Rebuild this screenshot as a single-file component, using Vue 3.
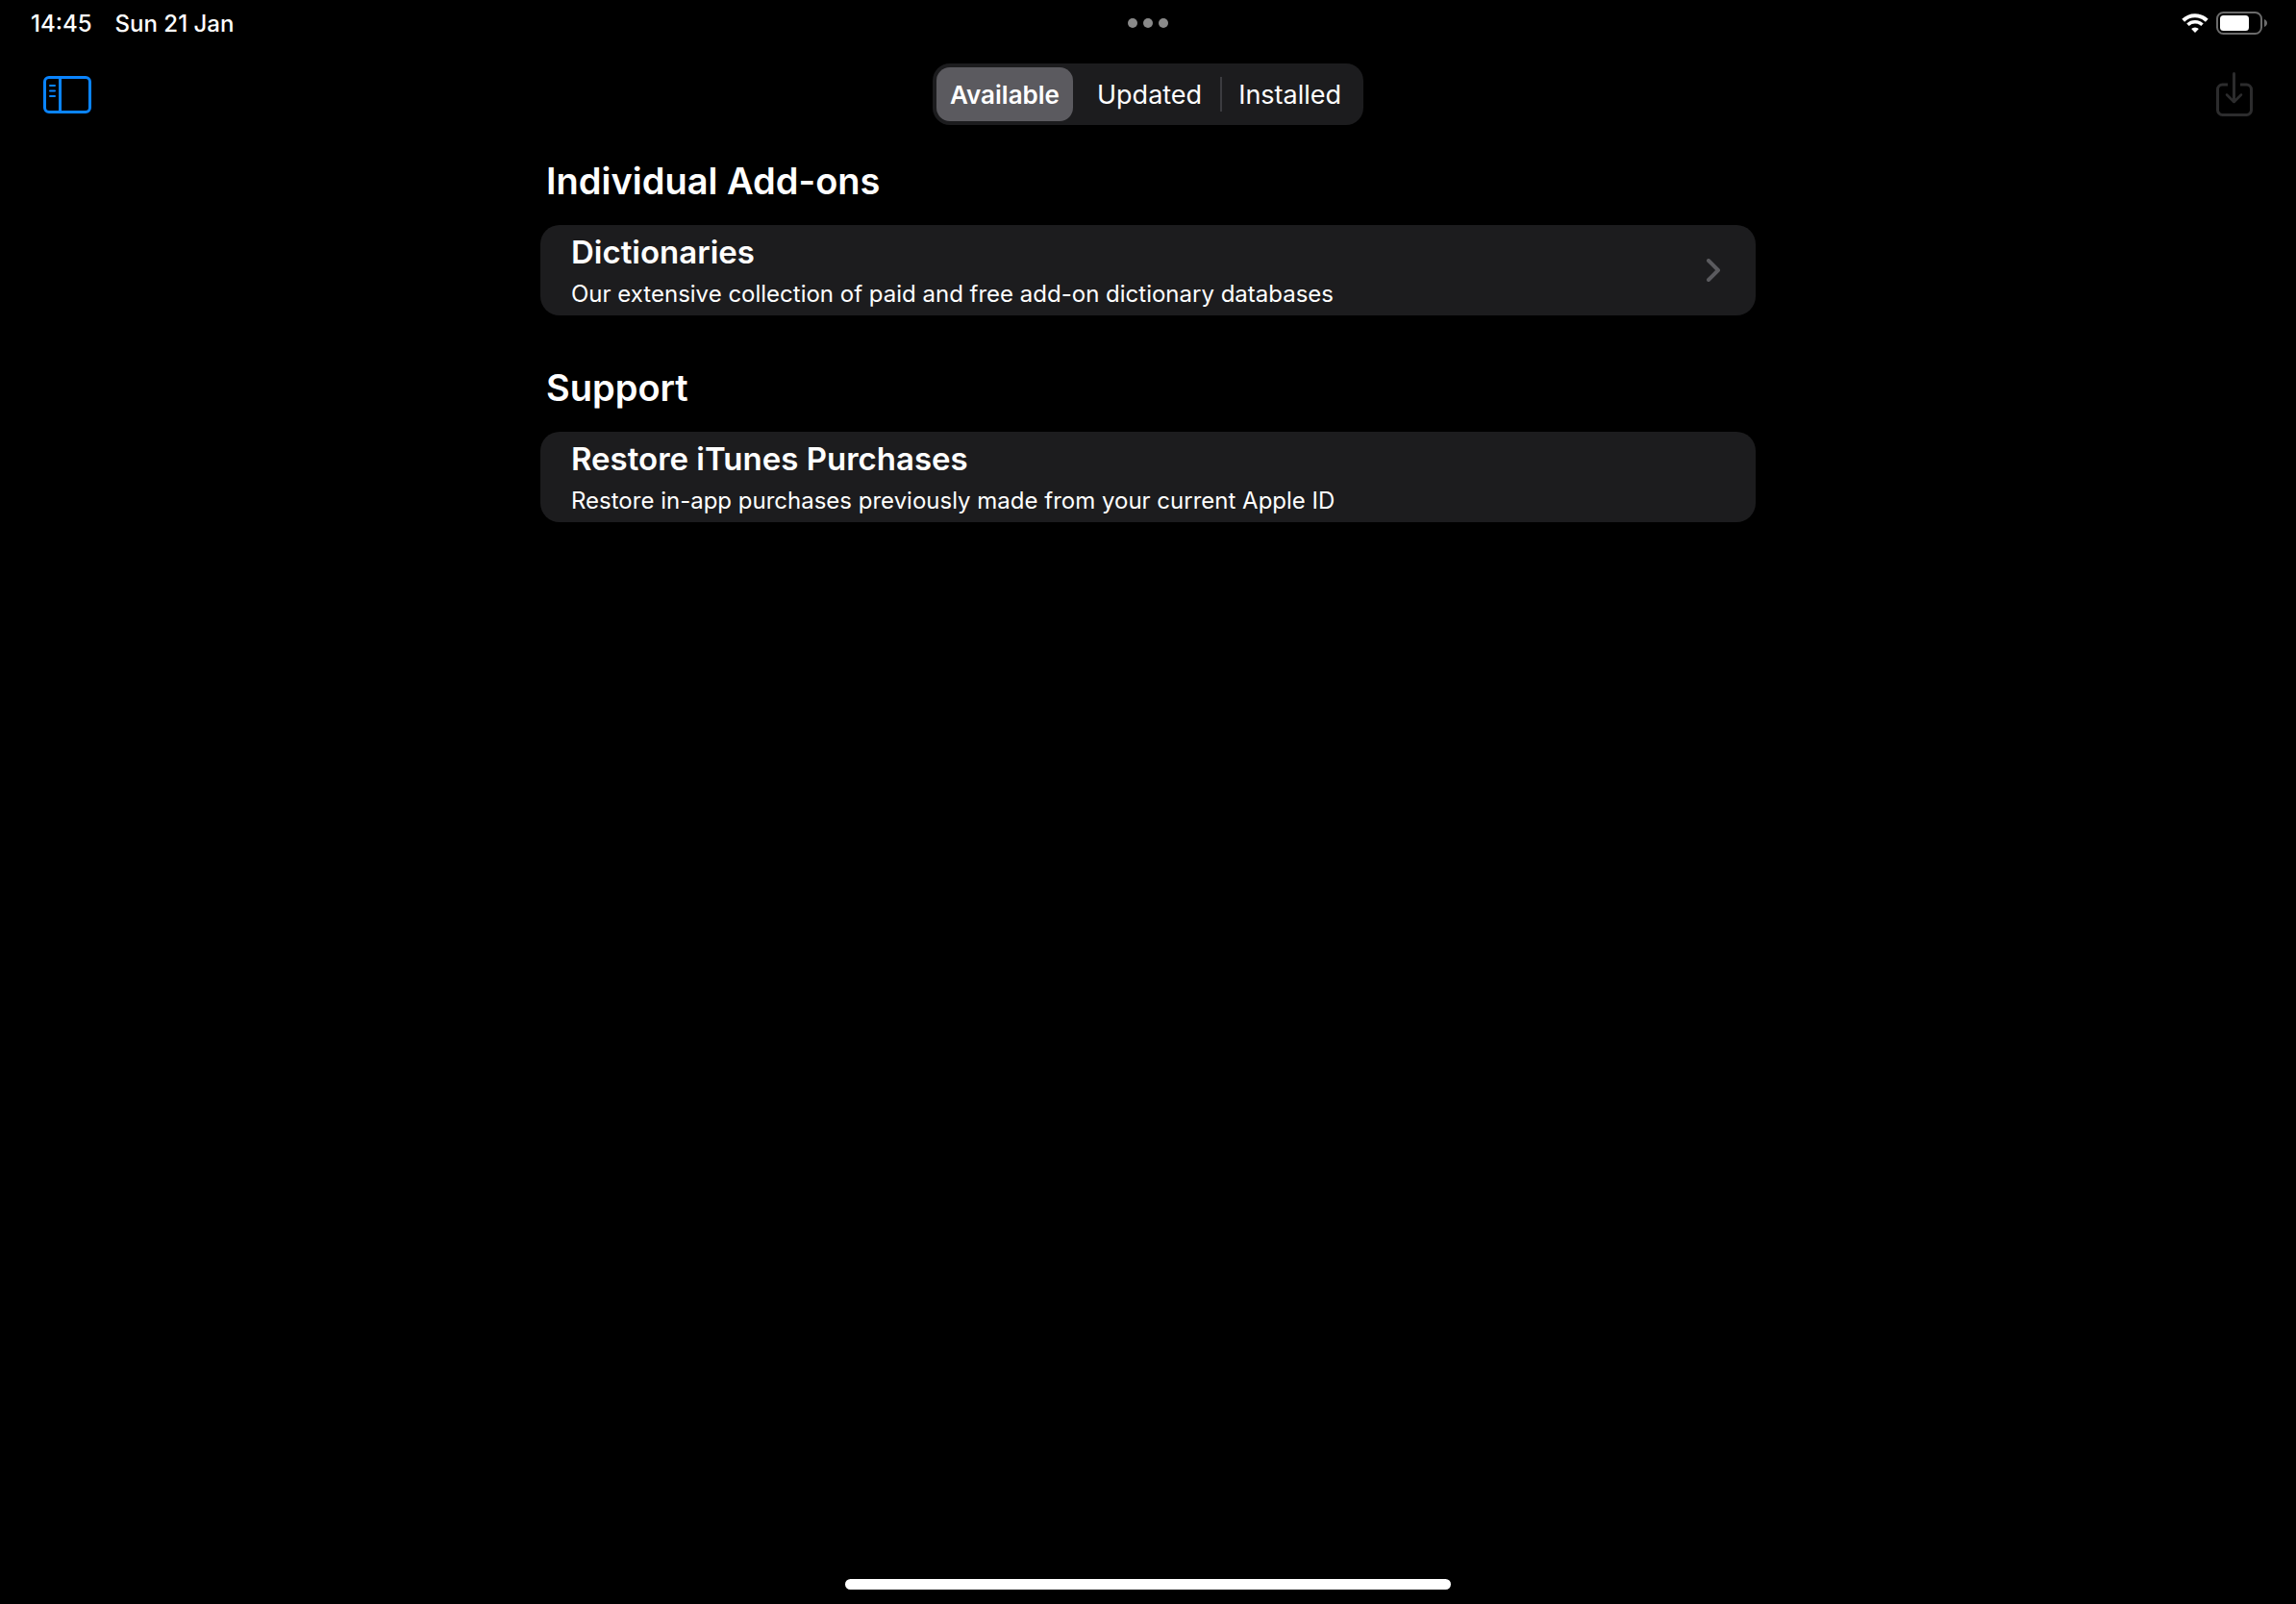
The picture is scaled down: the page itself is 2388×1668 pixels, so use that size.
<template>
    <div class="screen">
        <!-- Status bar -->
        <header class="status-bar">
            <div class="status-left">
                <span>14:45</span>
                <span>Sun 21 Jan</span>
            </div>
            <button type="button" class="multitask" aria-label="Multitasking">
                <span class="dot"></span>
                <span class="dot"></span>
                <span class="dot"></span>
            </button>
            <div class="status-right">
                <svg class="wifi" width="28" height="20" viewBox="0 0 28 20" fill="none" aria-label="Wi-Fi">
                    <path d="M1.7 7.2a17.6 17.6 0 0 1 24.6 0" stroke="#fff" stroke-width="4" />
                    <path d="M6.5 11.7a10.9 10.9 0 0 1 15 0" stroke="#fff" stroke-width="3.6" />
                    <path d="M14 20l-3.9-4a5.7 5.7 0 0 1 7.8 0z" fill="#fff" />
                </svg>
                <svg width="53" height="24" viewBox="0 0 53 24" fill="none" aria-label="Battery">
                    <rect x="1" y="1" width="46" height="22" rx="6.5" stroke="#6b6b6b" stroke-width="2" />
                    <rect x="4" y="4" width="30" height="16" rx="3.5" fill="#fff" />
                    <path d="M50 8c4 1.4 4 6.6 0 8z" fill="#6b6b6b" />
                </svg>
            </div>
        </header>

        <!-- Toolbar -->
        <nav class="toolbar">
            <button type="button" class="icon-button" aria-label="Show sidebar">
                <svg width="50" height="39" viewBox="0 0 50 39" fill="none" stroke="#0a84ff">
                    <rect x="1.5" y="1.5" width="47" height="36" rx="4.5" stroke-width="3" />
                    <path d="M17.5 1.5v36" stroke-width="3" />
                    <path d="M7 10h5M7 15.5h5M7 21h5" stroke-width="2" stroke-linecap="round" />
                </svg>
            </button>
            <div class="segments" role="group" aria-label="Add-on filter">
                <button v-for="tab in tabs"
                        :key="tab"
                        type="button"
                        class="segment"
                        :class="{ active: tab === activeTab }"
                        :aria-pressed="tab === activeTab"
                        @click="activeTab = tab">
                    {{ tab }}
                </button>
            </div>
            <button type="button" class="icon-button download" aria-label="Download all" disabled>
                <svg width="38" height="46" viewBox="0 0 38 46" fill="none" stroke="#2c2c2d" stroke-width="3" stroke-linecap="round" stroke-linejoin="round">
                    <path d="M12 13H6.5a5 5 0 0 0-5 5v21.500a5 5 0 0 0 5 5h25a5 5 0 0 0 5-5V18a5 5 0 0 0-5-5H25" stroke-linecap="butt" />
                    <path d="M18.5 1.5v29" />
                    <path d="M11 23.5l7.500 7.500 7.500-7.500" stroke-width="2.5" />
                </svg>
            </button>
        </nav>

        <!-- Add-on sections -->
        <main class="content">
            <section v-for="section in sections" :key="section.heading" class="section">
                <h2 class="heading">{{ section.heading }}</h2>
                <button type="button" class="card">
                    <span class="card-text">
                        <span class="card-title">{{ section.title }}</span>
                        <span class="card-subtitle">{{ section.subtitle }}</span>
                    </span>
                    <svg v-if="section.hasMore" width="15" height="24" viewBox="0 0 15 24" fill="none" stroke="#5a5a5e" stroke-width="4" stroke-linecap="round" stroke-linejoin="round">
                        <path d="M2 2l10 10L2 22" />
                    </svg>
                </button>
            </section>
        </main>

        <div class="home-indicator"></div>
    </div>
</template>

<script setup>
    import { ref } from 'vue';

    const tabs = ['Available', 'Updated', 'Installed'];
    const activeTab = ref('Available');

    const sections = [
        {
            heading: 'Individual Add-ons',
            title: 'Dictionaries',
            subtitle: 'Our extensive collection of paid and free add-on dictionary databases',
            hasMore: true,
        },
        {
            heading: 'Support',
            title: 'Restore iTunes Purchases',
            subtitle: 'Restore in-app purchases previously made from your current Apple ID',
            hasMore: false,
        },
    ];
</script>

<style>
    body {
        margin: 0;
        background: #000;
    }
</style>

<style scoped>
    .screen {
        box-sizing: border-box;
        display: flex;
        flex-direction: column;
        min-height: 100vh;
        padding-bottom: 15px;
        background: #000;
        color: #fff;
        font-family: Inter, "Liberation Sans", sans-serif;
    }

    button {
        margin: 0;
        padding: 0;
        border: none;
        background: none;
        color: inherit;
        font: inherit;
        cursor: pointer;
    }

    svg {
        display: block;
        flex: none;
    }

    .status-bar, .toolbar {
        display: grid;
        grid-template-columns: 1fr auto 1fr;
        align-items: center;
    }

    .status-bar {
        height: 48px;
        padding: 0 30px;
        font-size: 24px;
        font-weight: 500;
    }

    .status-left {
        display: flex;
        gap: 24px;
        padding-left: 2px;
    }

    .multitask {
        display: flex;
        gap: 6px;
    }

    .dot {
        width: 10px;
        height: 10px;
        border-radius: 50%;
        background: #8a8a8a;
    }

    .status-right {
        display: flex;
        justify-content: flex-end;
        align-items: center;
        gap: 8px;
    }

    .toolbar {
        padding: 18px 45px 0;
    }

    .icon-button {
        justify-self: start;
    }

    .download {
        justify-self: end;
        cursor: default;
    }

    .segments {
        display: flex;
        box-sizing: border-box;
        height: 64px;
        padding: 4px;
        border-radius: 18px;
        background: #1c1c1e;
    }

    .segment {
        position: relative;
        padding: 0 19px;
        border-radius: 14px;
        font-size: 27px;
    }

        .segment.active {
            padding: 0 14px;
            margin-right: 6px;
            background: #5b5a5f;
            font-size: 26px;
            font-weight: 600;
        }

        /* Divider between two unselected segments */
        .segment:not(.active) + .segment:not(.active)::before {
            content: "";
            position: absolute;
            left: 0;
            top: 10px;
            bottom: 10px;
            width: 2px;
            background: #3c3c40;
        }

    .content {
        display: flex;
        flex-direction: column;
        gap: 51px;
        box-sizing: border-box;
        width: 100%;
        max-width: 1264px;
        margin: 34px auto 0;
    }

    .section {
        display: flex;
        flex-direction: column;
        gap: 22px;
    }

    .heading {
        margin: 0;
        padding-left: 6px;
        font-size: 38px;
        font-weight: 600;
        line-height: 48px;
    }

    .card {
        display: flex;
        justify-content: space-between;
        align-items: center;
        padding: 6px 36px 6px 32px;
        border-radius: 20px;
        background: #1c1c1e;
        text-align: left;
    }

    .card-text {
        display: flex;
        flex-direction: column;
        gap: 6px;
    }

    .card-title {
        font-size: 33px;
        font-weight: 600;
        line-height: 44px;
    }

    .card-subtitle {
        font-size: 24px;
        line-height: 32px;
    }

    .home-indicator {
        width: 630px;
        max-width: 60%;
        height: 11px;
        margin: auto auto 0;
        border-radius: 6px;
        background: #fff;
    }
</style>
